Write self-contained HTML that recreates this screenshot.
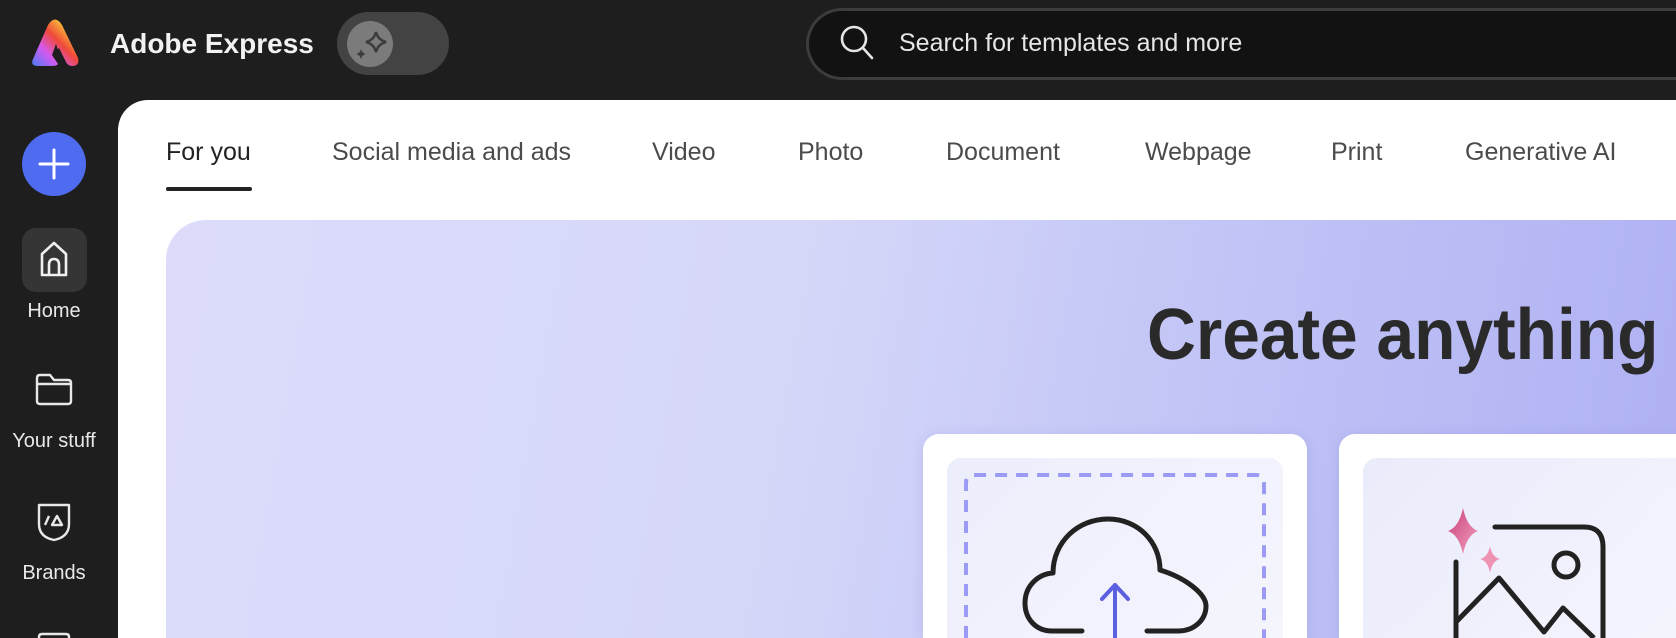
<!DOCTYPE html>
<html><head><meta charset="utf-8"><style>
*{margin:0;padding:0;box-sizing:border-box}
html,body{width:1676px;height:638px;overflow:hidden;background:#1e1e1e;font-family:"Liberation Sans",sans-serif}
#root{position:relative;width:1676px;height:638px;overflow:hidden;background:#1e1e1e}
.abs{position:absolute;white-space:nowrap}
.tab{position:absolute;top:137px;font-size:25px;color:#4b4b4b;line-height:30px}
.side{position:absolute;left:0;width:108px;text-align:center;color:#e8e8e8;font-size:20px}
</style></head><body><div id="root">
<div class="abs" style="left:110px;top:26px;font-size:28px;font-weight:bold;color:#f2f2f2;line-height:36px">Adobe Express</div>
<div class="abs" style="left:337px;top:12px;width:112px;height:63px;border-radius:32px;background:#434343"></div>
<div class="abs" style="left:347px;top:21px;width:46px;height:46px;border-radius:50%;background:#7b7b7b"></div>
<div class="abs" style="left:806px;top:8px;width:870px;height:72px;border-radius:36px 0 0 36px;background:#121212;border:3px solid #3c3c3c;border-right:none"></div>
<div class="abs" style="left:899px;top:27px;font-size:25px;color:#e6e6e6;line-height:32px">Search for templates and more</div>

<div class="abs" style="left:118px;top:100px;width:1558px;height:538px;background:#fff;border-top-left-radius:30px"></div>
<div class="tab" style="left:166px;color:#222">For you</div>
<div class="abs" style="left:166px;top:187px;width:86px;height:4px;border-radius:2px;background:#222"></div>
<div class="tab" style="left:332px">Social media and ads</div>
<div class="tab" style="left:652px">Video</div>
<div class="tab" style="left:798px">Photo</div>
<div class="tab" style="left:946px">Document</div>
<div class="tab" style="left:1145px">Webpage</div>
<div class="tab" style="left:1331px">Print</div>
<div class="tab" style="left:1465px">Generative AI</div>

<div class="abs" style="left:166px;top:220px;width:1510px;height:418px;border-radius:40px 0 0 0;background:linear-gradient(100deg,#dcdcfa 0%,#d6d8f9 40%,#c3c6f6 65%,#aeb0f3 100%)"></div>
<div class="abs" style="left:1147px;top:290px;font-size:72px;font-weight:bold;color:#2a2a2a;line-height:90px;transform:scaleX(0.94);transform-origin:left top">Create anything</div>

<div class="abs" style="left:923px;top:434px;width:384px;height:204px;border-radius:16px 16px 0 0;background:#fff;box-shadow:0 2px 12px rgba(80,80,180,.15)"></div>
<div class="abs" style="left:947px;top:458px;width:336px;height:180px;border-radius:14px 14px 0 0;background:linear-gradient(135deg,#eceefc,#f5f5fd)"></div>
<div class="abs" style="left:1339px;top:434px;width:337px;height:204px;border-radius:16px 0 0 0;background:#fff;box-shadow:0 2px 12px rgba(80,80,180,.15)"></div>
<div class="abs" style="left:1363px;top:458px;width:313px;height:180px;border-radius:14px 0 0 0;background:linear-gradient(135deg,#eaecfb,#f4f4fd)"></div>

<div class="abs" style="left:22px;top:132px;width:64px;height:64px;border-radius:50%;background:#4f6bf0"></div>
<div class="abs" style="left:22px;top:228px;width:65px;height:64px;border-radius:14px;background:#353535"></div>
<div class="side" style="top:300px">Home</div>
<div class="side" style="top:430px">Your stuff</div>
<div class="side" style="top:562px">Brands</div>

<svg class="abs" style="left:0;top:0" width="1676" height="638" viewBox="0 0 1676 638">
<defs>
<linearGradient id="lg" x1="0" y1="1" x2="1" y2="0">
<stop offset="0" stop-color="#4b7bf5"/><stop offset=".3" stop-color="#d45af0"/><stop offset=".55" stop-color="#f0483a"/><stop offset=".8" stop-color="#f7c23a"/><stop offset="1" stop-color="#5ee03e"/></linearGradient>
<linearGradient id="sp" x1="0" y1="0" x2="1" y2="1"><stop offset="0" stop-color="#c9407a"/><stop offset="1" stop-color="#f3a0bf"/></linearGradient>
<clipPath id="cp"><rect x="0" y="0" width="1676" height="638"/></clipPath>
</defs>
<g clip-path="url(#cp)">
<path d="M33 59 L48 25 Q55 14 62 25 L78 58 Q80 66 72 66 Q68 66 66 62 L59 48 L52 55 L58 64 Q57 66 52 66 L38 66 Q30 66 33 59Z" fill="url(#lg)"/>
<path d="M52 55 L56 44 L60 56Z" fill="#1e1e1e"/>
<path d="M376 32 Q378 40 386 42 Q378 44 376 52 Q374 44 366 42 Q374 40 376 32Z" fill="none" stroke="#3c3c3c" stroke-width="2.5"/>
<path d="M361 49 Q362 53 366 54 Q362 55 361 59 Q360 55 356 54 Q360 53 361 49Z" fill="#3c3c3c"/>
<circle cx="854" cy="39" r="12" fill="none" stroke="#e6e6e6" stroke-width="2.6"/>
<line x1="863" y1="48" x2="872" y2="58" stroke="#e6e6e6" stroke-width="2.6" stroke-linecap="round"/>
<path d="M54 150 V178 M40 164 H68" stroke="#fff" stroke-width="3" stroke-linecap="round"/>
<path d="M42 275 V254 L54 243 L66 254 V275 Z M49 275 V265 Q49 259 54 259 Q59 259 59 265 V275" fill="none" stroke="#f0f0f0" stroke-width="2.6" stroke-linejoin="round"/>
<path d="M37 378 Q37 375 40 375 H50 L54 380 H68 Q71 380 71 383 V401 Q71 404 68 404 H40 Q37 404 37 401 Z M37 384 H71" fill="none" stroke="#e8e8e8" stroke-width="2.4" stroke-linejoin="round"/>
<path d="M39 505 H69 V524 Q69 537 54 540 Q39 537 39 524 Z" fill="none" stroke="#e8e8e8" stroke-width="2.4" stroke-linejoin="round"/>
<path d="M45 525 L49 516 M52 525 L57 516 L62 525 Z" fill="none" stroke="#e8e8e8" stroke-width="2.4" stroke-linejoin="round"/>
<path d="M39 638 V637 Q39 634 42 634 H66 Q69 634 69 637 V638" fill="none" stroke="#e8e8e8" stroke-width="2.4"/>
<path d="M966 638 V483 Q966 475 974 475 H1256 Q1264 475 1264 483 V638" fill="none" stroke="#9b9bf6" stroke-width="4" stroke-dasharray="12 9"/>
<path d="M1082 631 H1052 C1036 631 1025 619 1025 603 C1025 586 1038 574 1053 573 C1053 542 1078 519 1108 519 C1138 519 1160 542 1160 570 C1186 578 1206 594 1206 606 C1206 620 1194 631 1178 631 H1147" fill="none" stroke="#222" stroke-width="5" stroke-linecap="round" stroke-linejoin="round"/>
<path d="M1115 585 V638 M1102 599 L1115 585 L1128 599" fill="none" stroke="#5b5fe0" stroke-width="4" stroke-linecap="round" stroke-linejoin="round"/>
<path d="M1463 508 Q1467 527 1478 531 Q1467 535 1463 554 Q1459 535 1448 531 Q1459 527 1463 508Z" fill="url(#sp)"/>
<path d="M1490 546 Q1492 557 1500 559 Q1492 561 1490 573 Q1488 561 1480 559 Q1488 557 1490 546Z" fill="#ef93b4"/>
<path d="M1456 562 V638 M1495 527 H1584 Q1603 527 1603 547 V638" fill="none" stroke="#222" stroke-width="5" stroke-linecap="round"/>
<path d="M1456 622 L1499 578 L1544 632 L1563 608 L1594 638" fill="none" stroke="#222" stroke-width="5" stroke-linejoin="round"/>
<circle cx="1566" cy="565" r="12" fill="none" stroke="#222" stroke-width="5"/>
</g>
</svg>
</div></body></html>
